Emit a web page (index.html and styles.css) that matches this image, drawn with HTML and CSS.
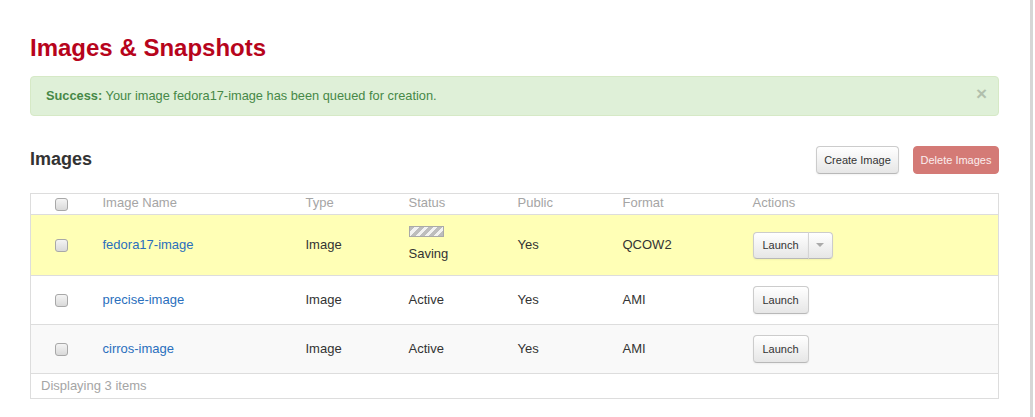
FILE: index.html
```html
<!DOCTYPE html>
<html>
<head>
<meta charset="utf-8">
<title>Images &amp; Snapshots</title>
<link rel="stylesheet" href="styles.css">
</head>
<body>
<div class="page">
  <h1 class="title">Images &amp; Snapshots</h1>
  <div class="alert">
    <p class="alert-text"><strong>Success:</strong> Your image fedora17-image has been queued for creation.</p>
    <span class="alert-close">×</span>
  </div>
  <div class="section-head">
    <h3 class="section-title">Images</h3>
    <div class="section-actions">
      <button class="btn btn-create">Create Image</button>
      <button class="btn btn-danger">Delete Images</button>
    </div>
  </div>
  <table class="tbl">
    <colgroup>
      <col class="c-check"><col class="c-name"><col class="c-type"><col class="c-status"><col class="c-public"><col class="c-format"><col>
    </colgroup>
    <thead>
      <tr>
        <th class="cell-check"><input type="checkbox" class="chk"></th>
        <th>Image Name</th>
        <th>Type</th>
        <th>Status</th>
        <th>Public</th>
        <th>Format</th>
        <th>Actions</th>
      </tr>
    </thead>
    <tbody>
      <tr class="row-saving">
        <td class="cell-check"><input type="checkbox" class="chk"></td>
        <td><a href="#" class="link">fedora17-image</a></td>
        <td>Image</td>
        <td><div class="progress"></div><div class="saving">Saving</div></td>
        <td>Yes</td>
        <td>QCOW2</td>
        <td><div class="btn-group"><button class="btn btn-main">Launch</button><button class="btn btn-caret"><span class="caret"></span></button></div></td>
      </tr>
      <tr>
        <td class="cell-check"><input type="checkbox" class="chk"></td>
        <td><a href="#" class="link">precise-image</a></td>
        <td>Image</td>
        <td>Active</td>
        <td>Yes</td>
        <td>AMI</td>
        <td><button class="btn btn-launch">Launch</button></td>
      </tr>
      <tr class="row-odd">
        <td class="cell-check"><input type="checkbox" class="chk"></td>
        <td><a href="#" class="link">cirros-image</a></td>
        <td>Image</td>
        <td>Active</td>
        <td>Yes</td>
        <td>AMI</td>
        <td><button class="btn btn-launch">Launch</button></td>
      </tr>
    </tbody>
    <tfoot>
      <tr>
        <td colspan="7" class="foot">Displaying 3 items</td>
      </tr>
    </tfoot>
  </table>
</div>
</body>
</html>
```

FILE: styles.css
```css
html, body {
  margin: 0;
  padding: 0;
  background: #fff;
}
body {
  font-family: "Liberation Sans", Arial, sans-serif;
  font-size: 13px;
  color: #333;
}
.page {
  width: 1033px;
  min-height: 417px;
  box-sizing: border-box;
  padding: 33px 31px 0 30px;
  border-right: 3px solid #d6d6d6;
}
.title {
  margin: 0;
  font-size: 24px;
  line-height: 30px;
  font-weight: bold;
  color: #b7041c;
}
.alert {
  margin-top: 13px;
  display: flex;
  justify-content: space-between;
  align-items: flex-start;
  background: #dff0d8;
  border: 1px solid #d6e9c6;
  border-radius: 4px;
  padding: 10px 11px 10px 15px;
  color: #468847;
}
.alert-text {
  margin: 0;
  font-size: 12.8px;
  line-height: 18px;
}
.alert-close {
  margin-top: -1px;
  font-size: 19px;
  font-weight: bold;
  line-height: 16px;
  color: #000;
  opacity: 0.2;
}
.section-head {
  margin-top: 30px;
  display: flex;
  justify-content: space-between;
  align-items: flex-start;
}
.section-title {
  margin: 0;
  font-size: 18px;
  line-height: 26px;
  font-weight: bold;
  color: #333;
}
.section-actions {
  display: flex;
  gap: 14px;
}
.btn {
  font-family: "Liberation Sans", Arial, sans-serif;
  font-size: 11px;
  height: 28px;
  padding: 0;
  white-space: nowrap;
  color: #333;
  background: linear-gradient(#ffffff, #e6e6e6);
  border: 1px solid #cccccc;
  border-bottom-color: #b8b8b8;
  border-radius: 4px;
  box-shadow: inset 0 1px 0 rgba(255,255,255,0.2), 0 1px 2px rgba(0,0,0,0.05);
  cursor: pointer;
}
.btn-create {
  width: 83px;
}
.btn-danger {
  width: 86px;
  color: #fbeeee;
  background: #d47a76;
  border-color: #d47a76;
  box-shadow: none;
}
.tbl {
  margin-top: 19px;
  width: 969px;
  border-collapse: collapse;
  table-layout: fixed;
  border: 1px solid #dddddd;
}
.c-check { width: 64px; }
.c-name { width: 203px; }
.c-type { width: 103px; }
.c-status { width: 109px; }
.c-public { width: 105px; }
.c-format { width: 130px; }
.tbl th {
  text-align: left;
  font-weight: normal;
  color: #a5a5a5;
  line-height: 17px;
  padding: 0 8px 3px;
  border-bottom: 1px solid #dddddd;
}
.tbl td {
  padding: 10px 8px;
  line-height: 18px;
  vertical-align: middle;
  border-bottom: 1px solid #dddddd;
}
.tbl .cell-check {
  padding-left: 24px;
  padding-right: 0;
}
.tbl th.cell-check {
  padding-top: 2px;
  padding-bottom: 1px;
}
.chk {
  -webkit-appearance: none;
  appearance: none;
  display: block;
  margin: 0;
  width: 13px;
  height: 13px;
  box-sizing: border-box;
  border: 1px solid #a8a8a8;
  border-radius: 3px;
  background: linear-gradient(#f4f4f4, #d9d9d9);
}
.row-saving td {
  background: #ffffb6;
}
.row-odd td {
  background: #f9f9f9;
}
.link {
  color: #2a6fbd;
  text-decoration: none;
}
.progress {
  width: 35px;
  height: 11px;
  box-sizing: border-box;
  margin: 1px 0 8px;
  border: 1px solid #a9a9a9;
  background: repeating-linear-gradient(135deg, #bdbdbd 0 3.5px, #f2f2f2 3.5px 6.5px);
}
.saving {
  margin-bottom: 2px;
}
.btn-group {
  display: flex;
}
.btn-group .btn {
  height: 27px;
}
.btn-main {
  width: 56px;
  border-radius: 4px 0 0 4px;
}
.btn-caret {
  width: 25px;
  border-left: 1px solid #d4d4d4;
  margin-left: -1px;
  border-radius: 0 4px 4px 0;
  display: flex;
  align-items: center;
  justify-content: center;
  padding: 0;
}
.caret {
  width: 0;
  height: 0;
  border-left: 4px solid transparent;
  border-right: 4px solid transparent;
  border-top: 4px solid #aaaaaa;
}
.btn-launch {
  width: 56px;
}
.tbl .foot {
  padding: 3px 10px;
  color: #a5a5a5;
  line-height: 18px;
}
```
